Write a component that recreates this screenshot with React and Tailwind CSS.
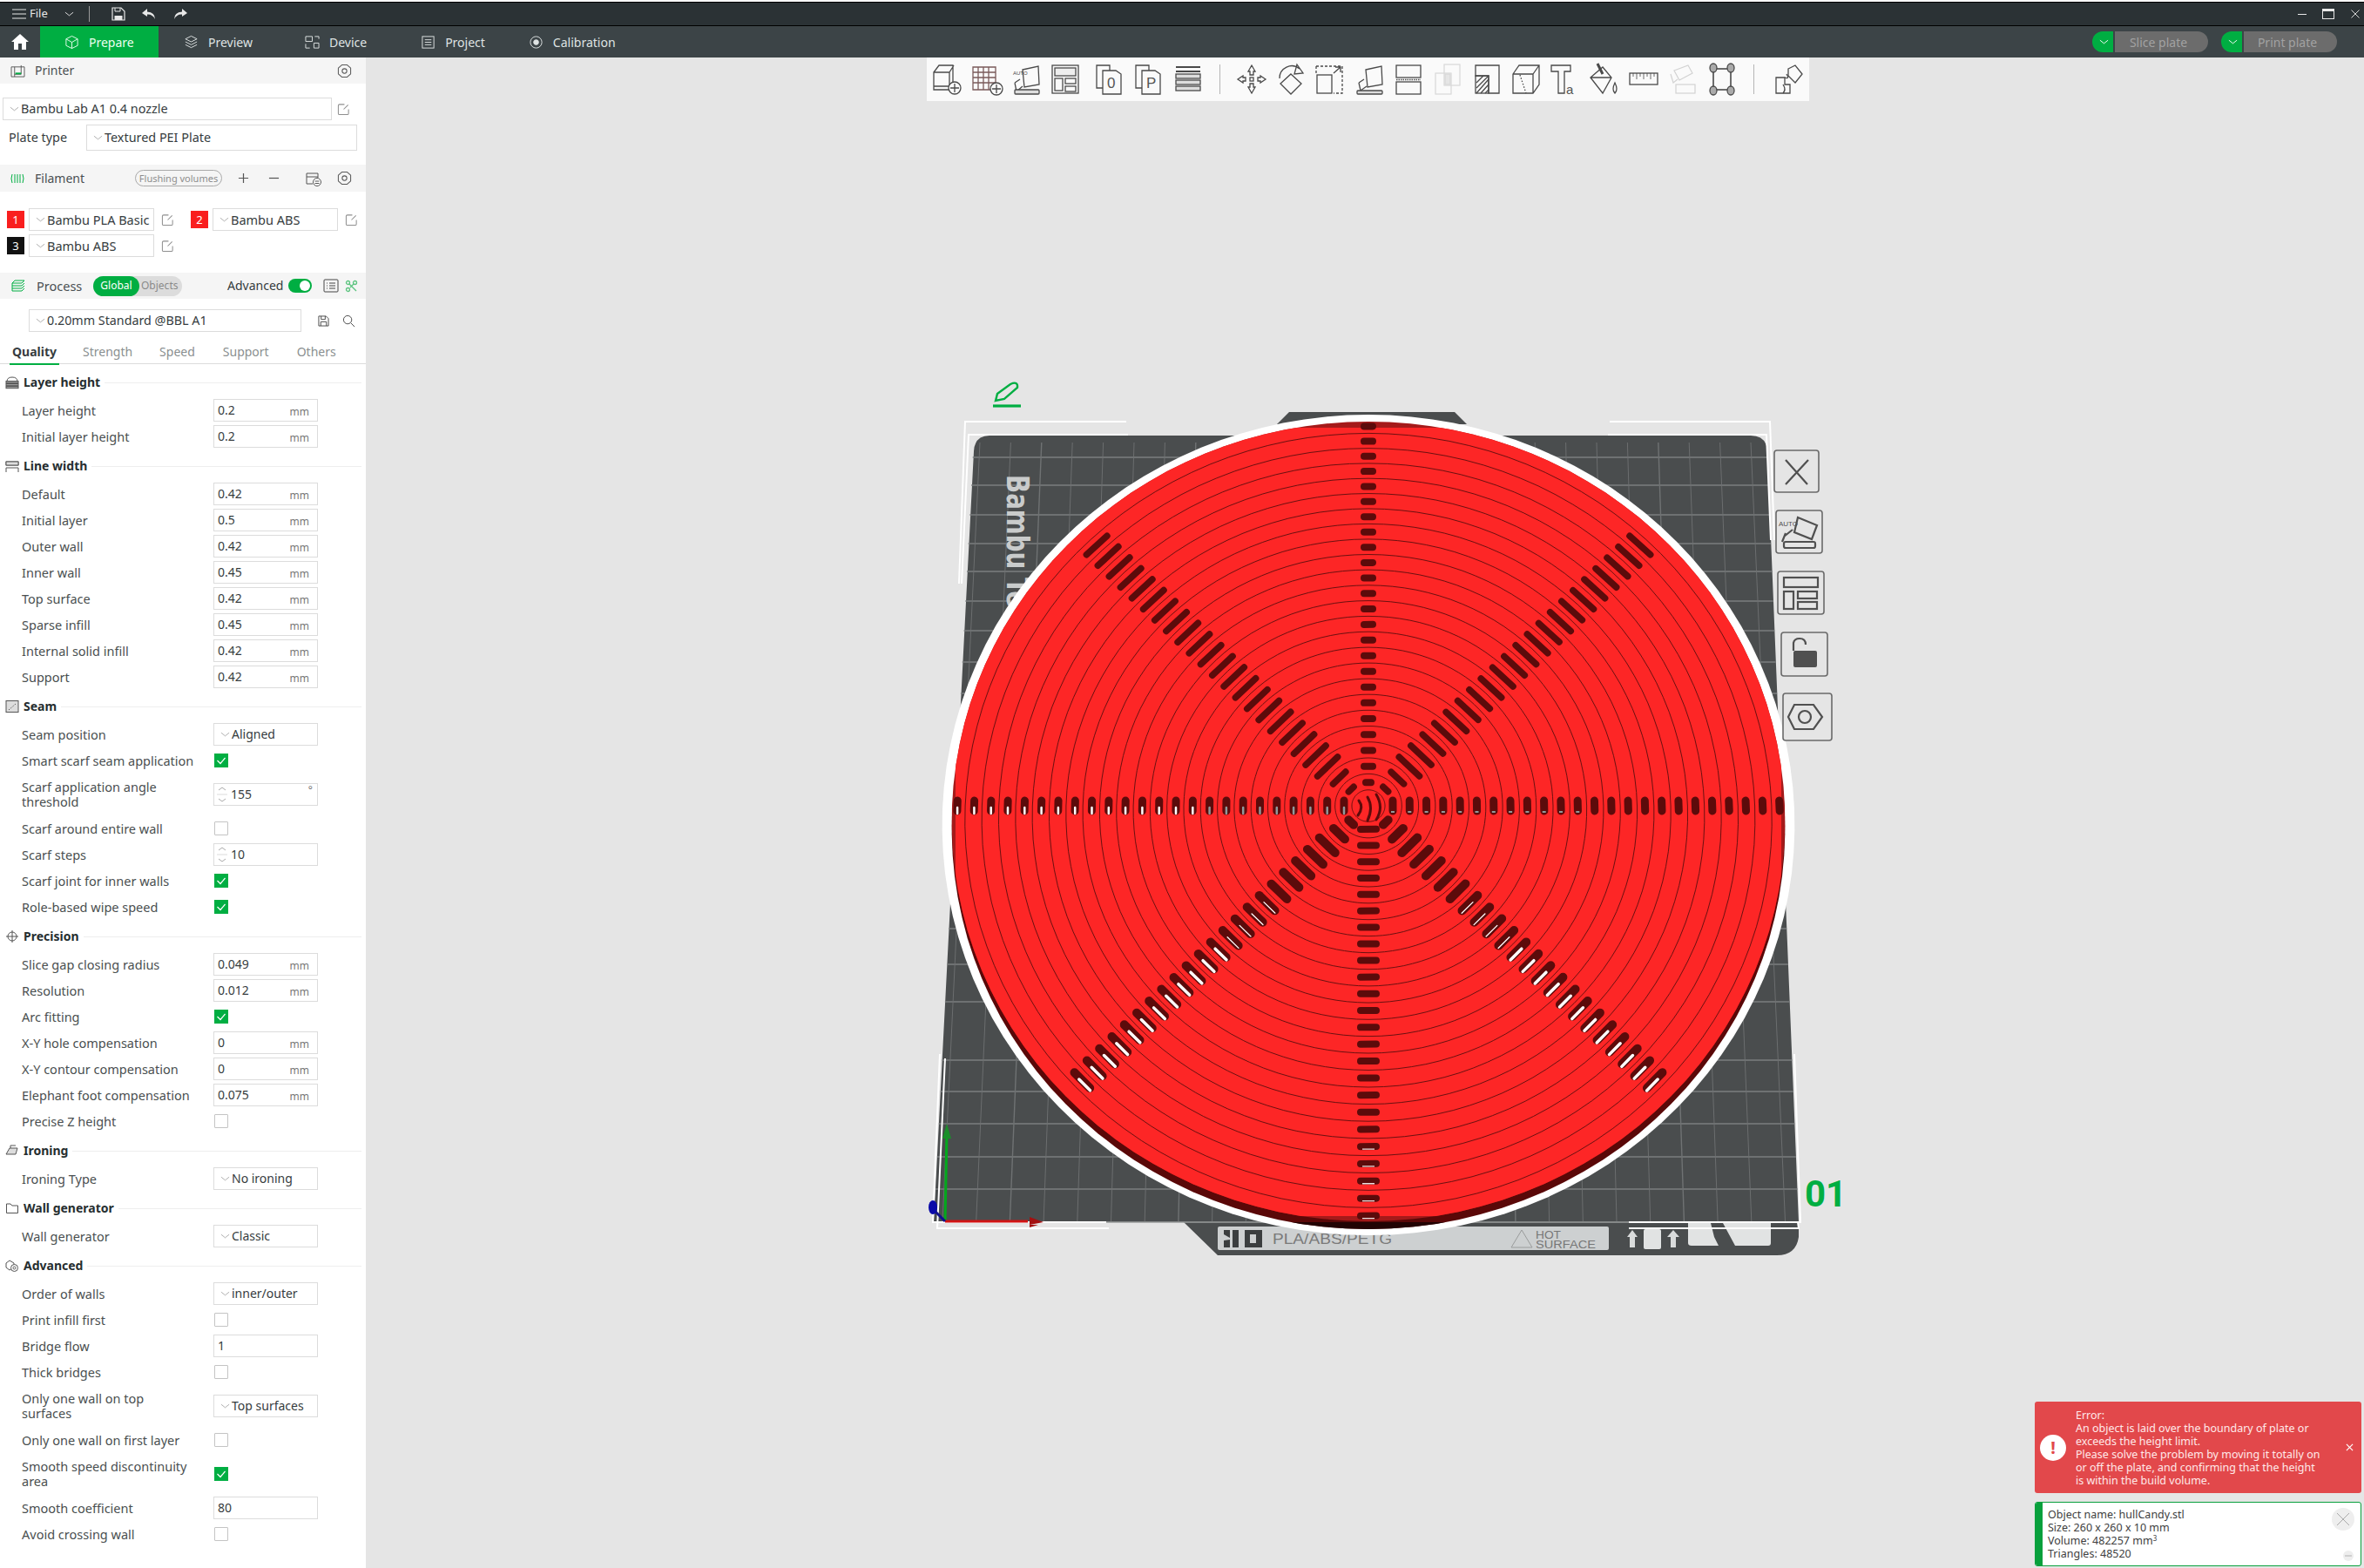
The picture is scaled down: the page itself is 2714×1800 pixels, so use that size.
const font = { fontFamily: '"Noto Sans", sans-serif' };

// top surface of the disc seen through the camera
const K = 0.0392;
function project(u, v, cfg) {
  const d = 1 + K * v;
  return [cfg.cx + (u * cfg.a) / d, cfg.cy - (v * cfg.b) / d];
}
const TOP = { cx: 1571, cy: 925, a: 478, b: 458.3 };
const WALL = { cx: 1571, cy: 934, a: 478, b: 458.3 };
const RIM = { cx: 1571, cy: 928.6, a: 489, b: 470.3 };

function circlePath(r, cfg) {
  let d = "";
  for (let i = 0; i <= 120; i++) {
    const t = (i / 120) * Math.PI * 2;
    const [x, y] = project(r * Math.cos(t), r * Math.sin(t), cfg);
    d += (i ? "L" : "M") + x.toFixed(1) + " " + y.toFixed(1);
  }
  return d + "Z";
}

const rings = Array.from({ length: 25 }, (_, k) => (19 + 19.3 * k) / 478);

function buildSlots() {
  const out = [];
  for (let s = 0; s < 8; s++) {
    const ang = (s * Math.PI) / 4;
    const diag = s % 2 === 1;
    const count = diag ? 23 : 24;
    for (let k = 0; k < count; k++) {
      const r = (28 + 19.3 * k) / 478;
      const [x, y] = project(r * Math.cos(ang), r * Math.sin(ang), TOP);
      const [x2, y2] = project(
        (r * Math.cos(ang + 0.01)),
        (r * Math.sin(ang + 0.01)),
        TOP
      );
      const len = Math.hypot(x2 - x, y2 - y);
      const tx = (x2 - x) / len;
      const ty = (y2 - y) / len;
      let half = 5;
      let width = 8;
      if (s === 2) half = k === 0 ? 3 : 5;
      if (s === 6) half = 9;
      if (s === 0 || s === 4) {
        half = 6;
        width = 9;
      }
      if (s === 1 || s === 3) {
        half = k === 0 ? 4 : k === 1 ? 10 : 16;
        width = 7.5;
      }
      if (s === 5 || s === 7) {
        half = k === 0 ? 4 : k === 1 ? 9 : 12.5;
        width = 10;
      }
      out.push({ s, k, x, y, tx, ty, half, width });
    }
  }
  return out;
}
const slots = buildSlots();

const hLines = [525, 557, 591, 624, 656, 690, 724, 760, 796, 832, 870, 908, 946, 986, 1026, 1066, 1107, 1150, 1217, 1253, 1290, 1328, 1365];
const vLines = Array.from({ length: 26 }, (_, k) => k);

function PlateScene() {
  return (
    <svg viewBox="420 66 2294 1734" className="absolute inset-0 h-full w-full">
      <defs>
        <clipPath id="bed">
          <rect x="1097" y="491" width="948" height="905" />
        </clipPath>
        <clipPath id="under">
          <rect x="1400" y="1403" width="340" height="20" />
        </clipPath>
        <clipPath id="disc">
          <path d={circlePath(1, TOP)} />
        </clipPath>
      </defs>

      {/* plate */}
      <path d="M1466 487 L1480 473 L1670 473 L1684 487Z" fill="#4a4d4e" />
      <path d="M1136 500 H2010 Q2028 500 2029 518 L2065 1403 V1420 Q2062 1441 2040 1441 H1398 L1359 1403 H1072 L1118 518 Q1119 500 1136 500Z" fill="#4a4d4e" />
      {hLines.map((y) => {
        const t = (y - 500) / 903;
        return <line key={y} x1={1118 - 46 * t} x2={2028 + 37 * t} y1={y} y2={y} stroke="#7b7e7f" strokeWidth="1.6" />;
      })}
      {vLines.map((k) => (
        <line key={k} x1={1125 + k * 35.4} y1="508" x2={1082 + k * 38.7} y2="1402" stroke="#6f7273" strokeWidth={k % 5 === 2 ? 1.4 : 0.9} />
      ))}
      <text transform="translate(1156 545) rotate(90)" fontFamily="DejaVu Sans" fontWeight="700" fontSize="36" fill="#c9cbcb" textLength="152" lengthAdjust="spacingAndGlyphs">
        Bambu Te
      </text>

      {/* bottom label */}
      <rect x="1398" y="1408" width="449" height="27" rx="2" fill="#cdd0d1" />
      <path d="M1405 1412 H1412 V1421 L1405 1417Z M1415 1412 H1422 V1432 H1415Z M1405 1424 L1412 1423 V1432 H1405Z" fill="#3b3e3f" />
      <rect x="1429" y="1412" width="20" height="20" fill="#3b3e3f" />
      <rect x="1435" y="1417" width="7" height="10" fill="#cdd0d1" />
      <text x="1461" y="1428" fontFamily="Liberation Sans" fontSize="17" fill="#7a7a7a" textLength="137" lengthAdjust="spacingAndGlyphs">PLA/ABS/PETG</text>
      <path d="M1735 1432 L1747 1412 L1759 1432Z" fill="none" stroke="#9a9c9c" />
      <text x="1763" y="1422" fontFamily="Liberation Sans" fontSize="12" fill="#777" textLength="29" lengthAdjust="spacingAndGlyphs">HOT</text>
      <text x="1763" y="1433" fontFamily="Liberation Sans" fontSize="12" fill="#777" textLength="69" lengthAdjust="spacingAndGlyphs">SURFACE</text>
      <path d="M1868 1420 L1874 1412 L1880 1420 H1877 V1432 H1871 V1420Z M1914 1420 L1921 1412 L1928 1420 H1924 V1432 H1918 V1420Z" fill="#d9dbdb" />
      <rect x="1887" y="1411" width="20" height="23" rx="2" fill="#e1e3e3" />
      <path d="M1938 1404 V1427 Q1938 1430 1942 1430 H1973 L1968 1420 L1964 1404Z M1978 1404 L1992 1430 H2030 Q2033 1430 2033 1427 V1404Z" fill="#e1e3e3" />

      {/* white bounding box corners */}
      <g stroke="#ffffff" strokeWidth="2" fill="none">
        <path d="M1293 484 H1108 L1101 670" />
        <path d="M1295 499 H1112 L1104 670" />
        <path d="M1848 484 H2032 L2037 620" />
        <path d="M1846 499 H2028 L2033 620" />
        <path d="M1079 1210 L1071 1403 H1270" />
        <path d="M1085 1215 L1076 1410 H1273" />
        <path d="M1870 1403 H2067 L2060 1210" />
        <path d="M1870 1410 H2065 L2064 1403" />
      </g>
      <line x1="1270" y1="1403" x2="1870" y2="1403" stroke="#9a9c9c" strokeWidth="1.5" />

      {/* disc */}
      <path d={circlePath(1, RIM)} fill="#ffffff" />
      <path d={circlePath(1, WALL)} fill="#5a0808" />
      <path d={circlePath(1, WALL)} fill="#220303" clipPath="url(#under)" />
      <path d={circlePath(1, TOP)} fill="#a51a1a" />
      <g clipPath="url(#bed)">
        <path d={circlePath(1, TOP)} fill="#fd2626" />
      </g>
      <g clipPath="url(#disc)">
        {rings.map((r, i) => (
          <path key={i} d={circlePath(r, TOP)} fill="none" stroke="#5a0f0f" strokeWidth="0.9" />
        ))}
        {slots.map((o, i) => (
          <line
            key={i}
            x1={o.x - o.tx * o.half}
            y1={o.y - o.ty * o.half}
            x2={o.x + o.tx * o.half}
            y2={o.y + o.ty * o.half}
            stroke="#5c0b0b"
            strokeWidth={o.width}
            strokeLinecap="round"
          />
        ))}
        {/* plate seen through the slots */}
        {slots
          .filter((o) => (o.s === 5 || o.s === 7) && o.k > 6)
          .map((o, i) => {
            const w = o.k > 10 ? 3.5 : 1.3;
            const e = o.s === 5 ? 1 : -1;
            const cx = o.x + o.tx * e * 4;
            const cy = o.y + o.ty * e * 4 + 2.5;
            return (
              <line
                key={i}
                x1={cx - o.tx * 9}
                y1={cy - o.ty * 9}
                x2={cx + o.tx * 9}
                y2={cy + o.ty * 9}
                stroke="#ffffff"
                strokeWidth={w}
                strokeLinecap="round"
              />
            );
          })}
        {slots
          .filter((o) => o.s === 6 && o.k > 18)
          .map((o, i) => (
            <line key={i} x1={o.x - 7} x2={o.x + 7} y1={o.y + 3} y2={o.y + 3} stroke="#e9e0e0" strokeWidth="1.3" />
          ))}
        {slots
          .filter((o) => o.s === 4)
          .map((o, i) => (
            <line key={i} x1={o.x} x2={o.x} y1={o.y + 2} y2={o.y + 9} stroke={o.k > 8 ? "#ffffff" : "#8e9a9c"} strokeWidth="2.5" strokeLinecap="round" />
          ))}
        {slots
          .filter((o) => o.s === 0 && o.k < 12)
          .map((o, i) => (
            <line key={i} x1={o.x - 2} x2={o.x + 2} y1={o.y + 7} y2={o.y + 7} stroke="#8e9a9c" strokeWidth="2" />
          ))}
        <path d="M1560 919 Q1566 927 1559 936 M1570 915 Q1577 927 1570 942 M1580 912 Q1589 927 1580 941" fill="none" stroke="#5c0b0b" strokeWidth="3" strokeLinecap="round" />
      </g>

      {/* axes */}
      <line x1="1085" y1="1402" x2="1087" y2="1300" stroke="#03a81c" strokeWidth="3" />
      <path d="M1087 1290 L1082 1307 H1092Z" fill="#1a8f2a" />
      <line x1="1085" y1="1402" x2="1180" y2="1402" stroke="#d01313" strokeWidth="3" />
      <path d="M1182 1397 L1198 1403 L1182 1406Z" fill="#a31010" />
      <path d="M1182 1406 H1192 L1182 1409Z" fill="#a31010" />
      <line x1="1085" y1="1402" x2="1073" y2="1390" stroke="#10108c" strokeWidth="3" />
      <ellipse cx="1071" cy="1386" rx="5" ry="8" fill="#0a0aa8" />

      {/* plate name + number */}
      <text x="2072" y="1385" fontFamily="Roboto" fontWeight="700" fontSize="42" fill="#00ae42">01</text>
      <g fill="none" stroke="#00ae42" strokeWidth="2.4">
        <path d="M1143 460 L1145 452 L1160 441 Q1169 437 1168 445 L1153 458Z" />
        <line x1="1140" y1="466" x2="1172" y2="466" strokeWidth="3.2" />
      </g>

      {/* plate buttons */}
      <g fill="#e5e5e5" stroke="#6a6a6a" strokeWidth="1.6">
        <rect x="2037" y="517" width="51" height="48" rx="3" />
        <rect x="2039" y="586" width="53" height="49" rx="3" />
        <rect x="2041" y="656" width="53" height="49" rx="3" />
        <rect x="2045" y="726" width="53" height="50" rx="3" />
        <rect x="2047" y="796" width="56" height="54" rx="3" />
      </g>
      <g fill="none" stroke="#505050" strokeWidth="2.2">
        <path d="M2050 528 L2075 556 M2076 528 L2050 556" />
        <path d="M2064 594 L2086 603 L2080 619 L2060 611Z" />
        <rect x="2048" y="622" width="36" height="7" rx="2" />
        <path d="M2050 612 L2046 622 M2058 608 L2048 616" />
        <rect x="2048" y="663" width="39" height="11" />
        <rect x="2048" y="679" width="11" height="20" />
        <rect x="2064" y="679" width="22" height="8" />
        <rect x="2064" y="691" width="22" height="8" />
        <path d="M2059 747 V738 Q2060 733 2066 733 Q2073 733 2073 740" />
        <path d="M2053 823 L2060 809 H2082 L2092 823 L2082 837 H2060Z" />
        <circle cx="2072" cy="823" r="7" />
      </g>
      <rect x="2059" y="747" width="27" height="19" rx="2" fill="#505050" />
      <text x="2042" y="604" fontFamily="Liberation Sans" fontSize="8" fill="#505050">AUTO</text>
    </svg>
  );
}

const s = { fill: "none", stroke: "#4a4a4a", strokeWidth: 1.3 };

const toolIcons = [
  <g {...s}><path d="M4 12 L10 4 H26 V28 H4Z M4 12 H22 V32 H4Z M22 12 L27 4" /><circle cx="28" cy="30" r="7" fill="#fafafa" /><path d="M28 25 V35 M23 30 H33" /></g>,
  <g {...s}><path d="M4 6 H30 V32 H4Z M4 12 H30 M4 18 H30 M4 24 H30 M10 6 V32 M16 6 V32 M22 6 V32" stroke="#7a5a5a" /><circle cx="31" cy="31" r="7" fill="#fafafa" /><path d="M31 26 V36 M26 31 H36" /></g>,
  <g {...s}><path d="M16 9 L34 5 L35 26 L18 29Z" /><path d="M7 24 L13 20 M7 24 L9 34 L16 28" /><rect x="7" y="32" width="28" height="5" rx="1" fill="#ddd" /><text x="5" y="15" fontSize="6" stroke="none" fill="#444" fontFamily="Liberation Sans">AUTO</text></g>,
  <g {...s}><rect x="5" y="4" width="30" height="32" /><rect x="8" y="7" width="24" height="9" fill="#eee" /><rect x="8" y="19" width="9" height="14" /><rect x="20" y="19" width="12" height="6" /><rect x="20" y="28" width="12" height="6" /></g>,
  <g {...s}><path d="M5 4 H20 V30 H5Z" /><path d="M12 10 H27 L33 14 V37 H12Z" fill="#fafafa" /><text x="17" y="30" fontSize="17" stroke="none" fill="#555" fontFamily="Liberation Sans">0</text></g>,
  <g {...s}><path d="M5 4 H20 V30 H5Z" /><path d="M12 10 H27 L33 14 V37 H12Z" fill="#fafafa" /><text x="17" y="30" fontSize="17" stroke="none" fill="#555" fontFamily="Liberation Sans">P</text></g>,
  <g {...s}><path d="M6 6 H34" strokeWidth="2" /><path d="M6 11 H34" strokeWidth="2" /><rect x="6" y="14" width="28" height="5" fill="#ddd" /><rect x="6" y="21" width="28" height="5" fill="#ddd" /><rect x="6" y="28" width="28" height="5" fill="#ddd" /></g>,
  <g {...s}><path d="M20 4 L16 11 H18 V15 H22 V11 H24Z M20 36 L16 29 H18 V25 H22 V29 H24Z M4 20 L10 16 V18 H13 V22 H10 V24Z M36 20 L30 16 V18 H27 V22 H30 V24Z" /><rect x="18" y="18" width="4" height="4" /></g>,
  <g {...s}><path d="M20 14 L32 25 L20 37 L8 25Z" /><path d="M7 19 A14 14 0 0 1 30 8" /><path d="M27 3 L34 13 L24 14Z" /></g>,
  <g {...s}><path d="M4 5 H34 V36 H24" strokeDasharray="3 2" /><path d="M4 5 V14" strokeDasharray="3 2" /><rect x="5" y="15" width="17" height="21" /><path d="M24 13 L32 6 M26 6 H32 V12" /></g>,
  <g {...s}><path d="M16 9 L34 5 L35 26 L18 29Z" /><path d="M8 24 L14 20 M8 24 L10 33 L17 28" /><rect x="6" y="33" width="29" height="4" rx="1" fill="#ddd" /></g>,
  <g {...s}><rect x="6" y="4" width="28" height="14" /><rect x="6" y="23" width="28" height="14" /><path d="M6 20.5 H34" strokeDasharray="1.5 1" /></g>,
  <g fill="none" stroke="#d8d8d8" strokeWidth="1.2"><rect x="16" y="3" width="18" height="24" /><rect x="6" y="13" width="18" height="24" /><rect x="17" y="14" width="6" height="12" fill="#e5e5e5" /></g>,
  <g {...s}><path d="M7 4 H34 V36 H22 V16 H7Z" /><rect x="7" y="16" width="15" height="20" /><path d="M8 36 L22 20 M8 30 L22 16 M8 24 L16 16 M13 36 L22 26 M18 36 L22 32" /></g>,
  <g {...s}><path d="M5 14 L12 4 H35 V26 L28 36 H5Z M5 14 H28 V36 M28 14 L35 4" /><path d="M13 15 L20 36" strokeDasharray="1.5 2" /></g>,
  <g {...s}><path d="M4 4 H26 V11 H19 V36 H12 V11 H4Z" /><text x="21" y="37" fontSize="15" stroke="none" fill="#555" fontFamily="Liberation Sans">a</text></g>,
  <g {...s}><path d="M4 18 L18 6 L28 18 L18 36Z M4 18 H28" /><path d="M12 2 L18 14" strokeWidth="3" /><path d="M32 24 Q28 32 32 36 Q36 32 32 24Z" /></g>,
  <g {...s}><rect x="4" y="13" width="32" height="13" /><path d="M8 13 V17 M12 13 V20 M16 13 V17 M20 13 V20 M24 13 V17 M28 13 V20 M32 13 V17" strokeWidth="0.8" /></g>,
  <g fill="none" stroke="#d2d2d2" strokeWidth="1.2"><path d="M10 10 L26 4 L31 13 L16 21Z" /><path d="M6 14 L9 24 L14 20" /><rect x="12" y="26" width="22" height="10" /></g>,
  <g {...s}><rect x="10" y="8" width="20" height="24" strokeWidth="1.6" /><ellipse cx="10" cy="7" rx="4" ry="5" fill="#aaa" /><ellipse cx="30" cy="7" rx="4" ry="5" fill="#aaa" /><ellipse cx="10" cy="33" rx="4" ry="5" fill="#aaa" /><ellipse cx="30" cy="33" rx="4" ry="5" fill="#aaa" /></g>,
];
const lastIcon = (
  <g {...s}>
    <path d="M22 8 L30 4 L38 14 L30 24 L22 16Z" />
    <path d="M8 18 H18 V26 H24 V36 H8Z" />
    <path d="M18 18 Q24 20 20 14 M16 26 Q20 32 16 36" />
  </g>
);

function ToolIcon({ children, className = "" }) {
  return (
    <div className={"flex h-[50px] w-[45px] items-center justify-center " + className}>
      <svg viewBox="0 0 40 40" className="h-[40px] w-[40px]">{children}</svg>
    </div>
  );
}

function Toolbar() {
  return (
    <div className="absolute left-[644px] top-0 flex h-[50px] w-[1013px] items-center bg-[#fafafa] pl-px">
      {toolIcons.slice(0, 7).map((ic, i) => <ToolIcon key={i} className={i === 4 ? "ml-[6px]" : ""}>{ic}</ToolIcon>)}
      <div className="flex w-[28px] justify-center"><div className="h-[34px] w-px bg-[#b5b5b5]" /></div>
      {toolIcons.slice(7).map((ic, i) => <ToolIcon key={i}>{ic}</ToolIcon>)}
      <div className="flex w-[29px] justify-center"><div className="h-[34px] w-px bg-[#b5b5b5]" /></div>
      <ToolIcon>{lastIcon}</ToolIcon>
    </div>
  );
}

function Chevron({ className = "", color = "#a9a9a9" }) {
  return (
    <svg viewBox="0 0 12 6" className={"h-[6px] w-[11px] shrink-0 " + className}>
      <path d="M1 1 L6 5 L11 1" fill="none" stroke={color} strokeWidth="1" />
    </svg>
  );
}

function Select({ text, className = "" }) {
  return (
    <div className={"flex items-center border border-[#dcdcdc] bg-white pl-[7px] " + className}>
      <Chevron />
      <span className="ml-[2px] whitespace-nowrap">{text}</span>
    </div>
  );
}

function EditIcon({ className = "" }) {
  return (
    <svg viewBox="0 0 16 16" className={"h-[15px] w-[15px] shrink-0 " + className}>
      <path d="M9 2 H3 Q1.5 2 1.5 3.5 V13 Q1.5 14.5 3 14.5 H12.5 Q14 14.5 14 13 V8" fill="none" stroke="#8f8f8f" strokeWidth="1.1" />
      <path d="M8 8 L13.5 2.5" stroke="#8f8f8f" strokeWidth="1.1" />
    </svg>
  );
}

function Gear({ className = "" }) {
  return (
    <svg viewBox="0 0 18 18" className={"h-[17px] w-[17px] " + className}>
      <path d="M6 1.5 H12 L16.5 5.5 V12.5 L12 16.5 H6 L1.5 12.5 V5.5Z" fill="none" stroke="#5a5a5a" strokeWidth="1.1" strokeLinejoin="round" />
      <circle cx="9" cy="9" r="2.8" fill="none" stroke="#5a5a5a" strokeWidth="1.1" />
    </svg>
  );
}

function Input({ value, unit }) {
  return (
    <div className="flex h-[26px] w-[120px] items-center justify-between border border-[#dcdcdc] pl-1 pr-[9px]">
      <span>{value}</span>
      {unit && <span className="mt-[3px] text-[12px] text-[#777]">{unit}</span>}
    </div>
  );
}

function Spin({ value, unit }) {
  return (
    <div className="flex h-[26px] w-[120px] items-center border border-[#dcdcdc] pl-[3px] pr-[5px]">
      <svg viewBox="0 0 12 20" className="h-[20px] w-[12px] shrink-0">
        <path d="M2 5 L6 2 L10 5 M2 15 L6 18 L10 15" fill="none" stroke="#a9a9a9" />
        <path d="M0 10 H12" stroke="#dcdcdc" />
      </svg>
      <span className="ml-[4px] flex-1">{value}</span>
      {unit && <span className="mb-[10px] text-[12px] leading-none text-[#777]">{unit}</span>}
    </div>
  );
}

function Check({ on }) {
  if (on) {
    return (
      <div className="ml-px flex h-4 w-4 items-center justify-center bg-[#00ae42]">
        <svg viewBox="0 0 16 16" className="h-4 w-4">
          <path d="M3.5 8 L7 11.5 L12.5 5" fill="none" stroke="#fff" strokeWidth="1.2" />
        </svg>
      </div>
    );
  }
  return <div className="ml-px h-4 w-4 rounded-[1px] border border-[#c4c4c4]" />;
}

function Row({ label, children, tall }) {
  return (
    <div className={"flex items-center pl-[25px] " + (tall ? "h-[48px]" : "h-[30px]")}>
      <div className="w-[220px] shrink-0 text-[14.5px] leading-[17px] text-[#4a4f50]">{label}</div>
      {children}
    </div>
  );
}

function Heading({ icon, title }) {
  return (
    <div className="flex h-[36px] items-center pl-[6px] pr-[5px] pt-[2px]">
      <svg viewBox="0 0 16 16" className="mr-[5px] h-4 w-4 shrink-0">
        {icon}
      </svg>
      <span className="whitespace-nowrap font-bold text-[#262e30]">{title}</span>
      <div className="ml-[5px] h-px flex-1 bg-[#eeeeee]" />
    </div>
  );
}

const hi = { fill: "none", stroke: "#555", strokeWidth: 1 };

const layerIcon = <g {...hi}><path d="M2 7 Q2 2 8 2 Q14 2 14 7" /><rect x="1" y="6.5" width="14" height="2.2" fill="#999" /><rect x="1" y="9.5" width="14" height="2.2" fill="#999" /><rect x="1" y="12.5" width="14" height="2.2" fill="#999" /></g>;
const lineIcon = <g {...hi}><path d="M1 3 H15 V7 H1Z M1 10 H15 M1 10 V15 M15 10 V15" /><rect x="1" y="3" width="14" height="4" fill="#ddd" /></g>;
const seamIcon = <g {...hi}><rect x="1" y="1.5" width="14" height="13" fill="#ddd" /><path d="M4 12 L12 5" strokeDasharray="1.5 1.5" /></g>;
const precisionIcon = <g {...hi}><circle cx="8" cy="8" r="5" /><path d="M8 1 V15 M1 8 H15" /></g>;
const ironIcon = <g {...hi}><path d="M1 12 L5 5 H14 L12 12Z" fill="#ddd" /><path d="M6 5 V2 H12" /></g>;
const wallIcon = <g {...hi}><path d="M1.5 3 H6 L8 5 H14.5 V13.5 H1.5Z" /></g>;
const advIcon = <g {...hi}><path d="M5 2 L10 5 V10 L5 13 L1 10 V5Z" /><circle cx="10.5" cy="10.5" r="4" fill="#fff" /><circle cx="10.5" cy="10.5" r="1.5" /></g>;

const MM = "mm";

function Settings() {
  return (
    <div>
      <Heading icon={layerIcon} title="Layer height" />
      <Row label="Layer height"><Input value="0.2" unit={MM} /></Row>
      <Row label="Initial layer height"><Input value="0.2" unit={MM} /></Row>

      <Heading icon={lineIcon} title="Line width" />
      <Row label="Default"><Input value="0.42" unit={MM} /></Row>
      <Row label="Initial layer"><Input value="0.5" unit={MM} /></Row>
      <Row label="Outer wall"><Input value="0.42" unit={MM} /></Row>
      <Row label="Inner wall"><Input value="0.45" unit={MM} /></Row>
      <Row label="Top surface"><Input value="0.42" unit={MM} /></Row>
      <Row label="Sparse infill"><Input value="0.45" unit={MM} /></Row>
      <Row label="Internal solid infill"><Input value="0.42" unit={MM} /></Row>
      <Row label="Support"><Input value="0.42" unit={MM} /></Row>

      <Heading icon={seamIcon} title="Seam" />
      <Row label="Seam position"><Select text="Aligned" className="h-[26px] w-[120px]" /></Row>
      <Row label="Smart scarf seam application"><Check on /></Row>
      <Row tall label={<>Scarf application angle<br />threshold</>}><Spin value="155" unit="°" /></Row>
      <Row label="Scarf around entire wall"><Check /></Row>
      <Row label="Scarf steps"><Spin value="10" /></Row>
      <Row label="Scarf joint for inner walls"><Check on /></Row>
      <Row label="Role-based wipe speed"><Check on /></Row>

      <Heading icon={precisionIcon} title="Precision" />
      <Row label="Slice gap closing radius"><Input value="0.049" unit={MM} /></Row>
      <Row label="Resolution"><Input value="0.012" unit={MM} /></Row>
      <Row label="Arc fitting"><Check on /></Row>
      <Row label="X-Y hole compensation"><Input value="0" unit={MM} /></Row>
      <Row label="X-Y contour compensation"><Input value="0" unit={MM} /></Row>
      <Row label="Elephant foot compensation"><Input value="0.075" unit={MM} /></Row>
      <Row label="Precise Z height"><Check /></Row>

      <Heading icon={ironIcon} title="Ironing" />
      <Row label="Ironing Type"><Select text="No ironing" className="h-[26px] w-[120px]" /></Row>

      <Heading icon={wallIcon} title="Wall generator" />
      <Row label="Wall generator"><Select text="Classic" className="h-[26px] w-[120px]" /></Row>

      <Heading icon={advIcon} title="Advanced" />
      <Row label="Order of walls"><Select text="inner/outer" className="h-[26px] w-[120px]" /></Row>
      <Row label="Print infill first"><Check /></Row>
      <Row label="Bridge flow"><Input value="1" /></Row>
      <Row label="Thick bridges"><Check /></Row>
      <Row tall label={<>Only one wall on top<br />surfaces</>}><Select text="Top surfaces" className="h-[26px] w-[120px]" /></Row>
      <Row label="Only one wall on first layer"><Check /></Row>
      <Row tall label={<>Smooth speed discontinuity<br />area</>}><Check on /></Row>
      <Row label="Smooth coefficient"><Input value="80" /></Row>
      <Row label="Avoid crossing wall"><Check /></Row>
    </div>
  );
}

function SectionBar({ className = "", children }) {
  return <div className={"flex items-center bg-[#f5f5f5] text-[#4a5052] " + className}>{children}</div>;
}

function Sidebar() {
  return (
    <aside className="h-full w-[420px] shrink-0 overflow-hidden bg-white text-[14px] leading-none text-[#363c3e]">
      <SectionBar className="h-[30px]">
        <svg viewBox="0 0 18 16" className="ml-[12px] h-[15px] w-[17px]">
          <path d="M1 3 H17 V15 H1Z M5 3 V15 M13 1 V12 H5" fill="none" stroke="#555" />
          <rect x="6" y="10" width="7" height="2" fill="#00ae42" />
        </svg>
        <span className="ml-[11px] flex-1">Printer</span>
        <Gear className="mr-[16px]" />
      </SectionBar>

      <div className="mt-4 flex items-center pl-[3px]">
        <Select text="Bambu Lab A1 0.4 nozzle" className="h-[26px] w-[378px] text-[14.4px]" />
        <EditIcon className="ml-[6px]" />
      </div>
      <div className="mt-[5px] flex items-center pl-[10px]">
        <span className="w-[89px] text-[14.4px]">Plate type</span>
        <Select text="Textured PEI Plate" className="h-[30px] w-[311px] text-[14.4px]" />
      </div>

      <SectionBar className="mt-[16px] h-[31px]">
        <svg viewBox="0 0 16 16" className="ml-[12px] h-[16px] w-[16px]">
          <path d="M2 3 Q0 8 2 13 M5 3 V13 M8 3 V13 M11 3 V13 M14 3 Q16 8 14 13" fill="none" stroke="#00ae42" />
        </svg>
        <span className="ml-[12px] w-[115px]">Filament</span>
        <span className="flex h-[19px] w-[100px] items-center justify-center rounded-full border border-[#aaa] text-[11px] text-[#8d8d8d]">Flushing volumes</span>
        <svg viewBox="0 0 14 14" className="ml-[18px] h-[13px] w-[13px]"><path d="M7 1 V13 M1 7 H13" stroke="#555" strokeWidth="1.3" /></svg>
        <svg viewBox="0 0 14 14" className="ml-[22px] h-[13px] w-[13px]"><path d="M1 7 H13" stroke="#555" strokeWidth="1.3" /></svg>
        <svg viewBox="0 0 18 18" className="ml-[30px] h-[18px] w-[18px]">
          <path d="M1 15 V3 H14 V8 M1 15 H8 M1 7 H14" fill="none" stroke="#555" />
          <circle cx="13" cy="13" r="4.5" fill="#fff" stroke="#555" />
          <path d="M10.5 12 H15.5 M10.5 14.5 H15.5" stroke="#555" />
        </svg>
        <Gear className="ml-[18px]" />
      </SectionBar>

      <div className="mt-[19px] flex h-[26px] items-center">
        <span className="ml-[8px] flex h-[20px] w-[20px] items-center justify-center bg-[#f91e1e] text-[13px] text-white">1</span>
        <Select text="Bambu PLA Basic" className="ml-[5px] h-[26px] w-[144px] text-[14.5px]" />
        <EditIcon className="ml-[8px]" />
        <span className="ml-[19px] flex h-[20px] w-[20px] items-center justify-center bg-[#f91e1e] text-[13px] text-white">2</span>
        <Select text="Bambu ABS" className="ml-[5px] h-[26px] w-[144px] text-[14.5px]" />
        <EditIcon className="ml-[8px]" />
      </div>
      <div className="mt-[4px] flex h-[26px] items-center">
        <span className="ml-[8px] flex h-[20px] w-[20px] items-center justify-center bg-[#111] text-[13px] text-white">3</span>
        <Select text="Bambu ABS" className="ml-[5px] h-[26px] w-[144px] text-[14.5px]" />
        <EditIcon className="ml-[8px]" />
      </div>

      <SectionBar className="mt-[18px] h-[30px]">
        <svg viewBox="0 0 16 16" className="ml-[13px] h-[16px] w-[16px]">
          <path d="M1 5 L4 2 H15 L12 5Z M1 5 V8 H12 L15 5 M1 8 V11 H12 L15 8 M1 11 V14 H12 L15 11" fill="none" stroke="#00ae42" />
        </svg>
        <span className="ml-[13px] w-[65px] text-[14.5px]">Process</span>
        <div className="flex h-[23px] w-[102px] items-center rounded-full bg-[#dcdcdc] text-[12px]">
          <span className="flex h-full w-[53px] items-center justify-center rounded-full bg-[#00ae42] text-white">Global</span>
          <span className="pl-[2px] text-[#8a8a8a]">Objects</span>
        </div>
        <span className="ml-[52px] text-[#363c3e]">Advanced</span>
        <div className="ml-[6px] flex h-[16px] w-[27px] items-center justify-end rounded-full bg-[#00ae42] pr-[2px]">
          <div className="h-[12px] w-[12px] rounded-full bg-white" />
        </div>
        <svg viewBox="0 0 18 16" className="ml-[13px] h-[16px] w-[18px]">
          <rect x="1" y="1" width="16" height="14" rx="1" fill="none" stroke="#444" />
          <path d="M4 5 H5 M4 8 H5 M4 11 H5 M7 5 H14 M7 8 H14 M7 11 H14" stroke="#444" />
        </svg>
        <svg viewBox="0 0 15 15" className="ml-[7px] h-[15px] w-[15px]">
          <g fill="none" stroke="#5cc47f" strokeWidth="1.3">
            <circle cx="3.5" cy="3.5" r="2" />
            <circle cx="11.5" cy="3.5" r="2" />
            <circle cx="3.5" cy="11.5" r="2" />
            <path d="M5 5 L13 13 M10 5 L6 9" />
          </g>
        </svg>
      </SectionBar>

      <div className="mt-[12px] flex h-[26px] items-center">
        <Select text="0.20mm Standard @BBL A1" className="ml-[33px] h-[26px] w-[313px] text-[14.3px]" />
        <svg viewBox="0 0 14 14" className="ml-[19px] h-[13px] w-[13px]">
          <path d="M1 1 H10 L13 4 V13 H1Z M4 1 V5 H9 V1 M3.5 13 V8 H10.5 V13" fill="none" stroke="#444" />
        </svg>
        <svg viewBox="0 0 16 16" className="ml-[15px] h-[15px] w-[15px]">
          <circle cx="6.5" cy="6.5" r="5" fill="none" stroke="#444" />
          <path d="M10.5 10.5 L15 15" stroke="#444" />
        </svg>
      </div>

      <div className="mt-[9px] flex h-[28px] items-center border-b border-[#dcdcdc] text-[#8a8f90]">
        <span className="relative ml-[14px] font-bold text-[#363c3e]">
          Quality
          <span className="absolute left-[-3px] right-[-3px] top-[20px] h-[2px] bg-[#00ae42]" />
        </span>
        <span className="ml-[30px]">Strength</span>
        <span className="ml-[31px]">Speed</span>
        <span className="ml-[32px]">Support</span>
        <span className="ml-[32px]">Others</span>
      </div>
      <div className="h-[2px]" />

      <Settings />
    </aside>
  );
}

function Notices() {
  return (
    <div className="absolute bottom-[2px] right-[3px] flex w-[375px] flex-col gap-[10px] text-[12.5px] leading-[15px]">
      <div className="flex h-[105px] items-center rounded-[3px] bg-[#e2484b] text-[#ffe9e9]">
        <div className="ml-[6px] flex h-[30px] w-[30px] shrink-0 items-center justify-center rounded-full bg-white text-[20px] font-bold text-[#e2484b]">!</div>
        <div className="ml-[11px] w-[300px] whitespace-nowrap">
          Error:<br />
          An object is laid over the boundary of plate or<br />
          exceeds the height limit.<br />
          Please solve the problem by moving it totally on<br />
          or off the plate, and confirming that the height<br />
          is within the build volume.
        </div>
        <svg viewBox="0 0 10 10" className="ml-[10px] h-[9px] w-[9px] shrink-0">
          <path d="M1 1 L9 9 M9 1 L1 9" stroke="#fff" strokeWidth="1.3" />
        </svg>
      </div>
      <div className="relative flex h-[74px] overflow-hidden rounded-[3px] border border-[#08a03c] bg-white text-[#404040]">
        <div className="w-[8px] shrink-0 bg-[#08a03c]" />
        <div className="ml-[6px] pt-[6px] whitespace-nowrap">
          Object name: hullCandy.stl<br />
          Size: 260 x 260 x 10 mm<br />
          Volume: 482257 mm<sup className="text-[8px]">3</sup><br />
          Triangles: 48520
        </div>
        <div className="absolute right-[7px] top-[6px] flex h-[26px] w-[26px] items-center justify-center rounded-full bg-[#eeeeee]">
          <svg viewBox="0 0 16 16" className="h-[16px] w-[16px]"><path d="M1 1 L15 15 M15 1 L1 15" stroke="#aaa" strokeWidth="1" /></svg>
        </div>
        <div className="absolute bottom-[5px] right-[8px] flex h-[12px] w-[12px] items-center justify-center rounded-full bg-[#eeeeee]">
          <div className="h-[2px] w-[8px] bg-[#cfcfcf]" />
        </div>
      </div>
    </div>
  );
}

function TopTab({ icon, label, active, className = "" }) {
  return (
    <div className={"flex h-full items-center " + (active ? "bg-[#00ae42] text-[#eafff0] " : "text-[#dfe3e3] ") + className}>
      <svg viewBox="0 0 18 18" className="h-[17px] w-[17px] shrink-0">
        <g fill="none" stroke="currentColor" strokeWidth="1">{icon}</g>
      </svg>
      <span className="ml-[11px]">{label}</span>
    </div>
  );
}

function PlateButton({ label, className = "" }) {
  return (
    <div className={"flex h-[24px] items-center " + className}>
      <div className="flex h-full w-[24px] items-center justify-center rounded-l-full bg-[#00ae42]">
        <Chevron color="#ffffff" className="ml-[2px]" />
      </div>
      <div className="ml-[2px] flex h-full w-[107px] items-center justify-center rounded-r-full bg-[#6c6c6c] pr-[7px] text-[#a2a2a2]">{label}</div>
    </div>
  );
}

export default function App() {
  return (
    <div className="flex h-screen w-[2714px] flex-col overflow-hidden bg-[#e5e5e5] text-[14px]" style={font}>
      <div className="h-[2px] shrink-0 bg-white" />
      <div className="flex h-[28px] shrink-0 items-center border-y border-black bg-[#2b3235] text-[13px] text-[#e8e8e8]">
        <svg viewBox="0 0 16 12" className="ml-[14px] h-[12px] w-[16px]"><path d="M0 1 H16 M0 6 H16 M0 11 H16" stroke="#e8e8e8" /></svg>
        <span className="ml-[4px]">File</span>
        <Chevron color="#e8e8e8" className="ml-[19px]" />
        <div className="ml-[17px] h-[18px] w-px bg-[#9a9a9a]" />
        <svg viewBox="0 0 16 16" className="ml-[25px] h-[16px] w-[16px]">
          <path d="M1 1 H11 L15 5 V15 H1Z" fill="none" stroke="#e8e8e8" strokeWidth="1.2" />
          <rect x="3.5" y="10" width="9" height="5" fill="#e8e8e8" />
          <path d="M4 1 V5 H10 V1" fill="none" stroke="#e8e8e8" />
        </svg>
        <svg viewBox="0 0 16 12" className="ml-[19px] h-[12px] w-[16px]"><path d="M6 0 L0 5 L6 9 V6.5 Q12 6 15 12 Q15 4 6 3.5Z" fill="#e8e8e8" /></svg>
        <svg viewBox="0 0 16 12" className="ml-[20px] h-[12px] w-[16px]"><path d="M10 0 L16 5 L10 9 V6.5 Q4 6 1 12 Q1 4 10 3.5Z" fill="#e8e8e8" /></svg>
        <div className="flex-1" />
        <div className="h-px w-[10px] bg-[#e8e8e8]" />
        <div className="ml-[18px] h-[12px] w-[14px] border border-[#e8e8e8] border-t-[3px]" />
        <svg viewBox="0 0 10 10" className="ml-[19px] mr-[5px] h-[10px] w-[10px]"><path d="M0.5 0.5 L9.5 9.5 M9.5 0.5 L0.5 9.5" stroke="#d8d8d8" /></svg>
      </div>

      <div className="flex h-[36px] shrink-0 items-center bg-[#3c4447]">
        <div className="flex w-[46px] justify-center">
          <svg viewBox="0 0 20 18" className="h-[20px] w-[20px]"><path d="M10 0 L20 9 H17 V18 H12 V11 H8 V18 H3 V9 H0Z" fill="#fff" /></svg>
        </div>
        <TopTab active label="Prepare" className="w-[136px] pl-[28px]" icon={<><path d="M9 1.5 L16 5 V13 L9 16.5 L2 13 V5Z" /><path d="M2 5 L9 9 L16 5 M9 9 V16.5" /></>} />
        <TopTab label="Preview" className="ml-[29px]" icon={<><path d="M9 1.5 L16 5 L9 8.5 L2 5Z" /><path d="M2 8.5 L9 12 L16 8.5 M2 12 L9 15.5 L16 12" /></>} />
        <TopTab label="Device" className="ml-[60px]" icon={<><path d="M1 2 H9 V8 H1Z M12 2 H17 V5 M1 11 V16 H6 M11 10 H17 V16 H11Z" /></>} />
        <TopTab label="Project" className="ml-[62px]" icon={<><rect x="2" y="2" width="14" height="14" /><path d="M5 6 H13 M5 9 H13 M5 12 H13" /></>} />
        <TopTab label="Calibration" className="ml-[50px]" icon={<><circle cx="9" cy="9" r="7" /><circle cx="9" cy="9" r="3" fill="currentColor" /></>} />
        <div className="flex-1" />
        <PlateButton label="Slice plate" />
        <PlateButton label="Print plate" className="ml-[15px] mr-[31px]" />
      </div>

      <div className="flex min-h-0 flex-1">
        <Sidebar />
        <main className="relative flex-1">
          <PlateScene />
          <Toolbar />
          <Notices />
        </main>
      </div>
    </div>
  );
}
